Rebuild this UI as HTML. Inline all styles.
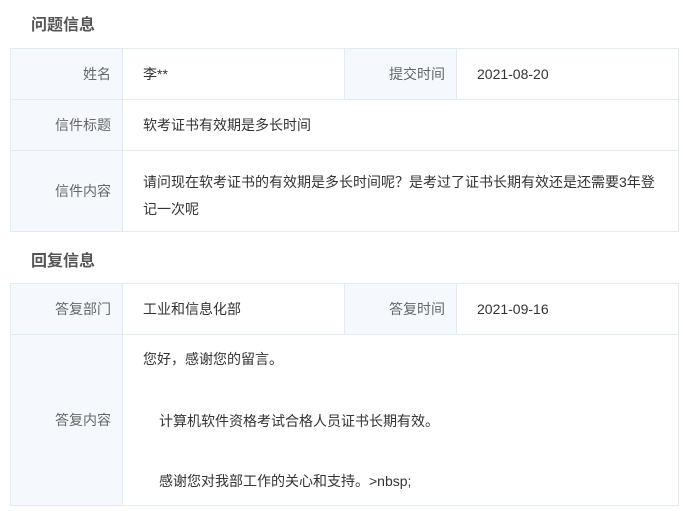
<!DOCTYPE html>
<html><head><meta charset="utf-8"><style>
body{margin:0;width:683px;height:511px;background:#fff;font-family:"Liberation Sans","Noto Sans CJK SC",sans-serif;font-size:14px;color:#333;position:relative;overflow:hidden}
.t{position:absolute;font-size:16px;font-weight:bold;color:#555;}
.c{position:absolute;box-sizing:border-box;border:1px solid #ddecf8;}
.l{background:#f5f9fe;color:#666;text-align:right;padding-right:11px;display:flex;align-items:center;justify-content:flex-end}
.v{background:#fff;display:flex;align-items:center;padding-left:20px}
p{margin:0;position:absolute;white-space:nowrap}
</style></head><body>
<div class="t" style="left:31px;top:11px">问题信息</div>
<div class="c l" style="left:10px;top:48px;width:113px;height:52px">姓名</div>
<div class="c v" style="left:122px;top:48px;width:223px;height:52px">李**</div>
<div class="c l" style="left:344px;top:48px;width:113px;height:52px">提交时间</div>
<div class="c v" style="left:456px;top:48px;width:223px;height:52px">2021-08-20</div>
<div class="c l" style="left:10px;top:99px;width:113px;height:52px">信件标题</div>
<div class="c v" style="left:122px;top:99px;width:557px;height:52px">软考证书有效期是多长时间</div>
<div class="c l" style="left:10px;top:150px;width:113px;height:82px">信件内容</div>
<div class="c" style="left:122px;top:150px;width:557px;height:82px;padding:18px 20px 0 20px;line-height:27px">请问现在软考证书的有效期是多长时间呢？是考过了证书长期有效还是还需要3年登记一次呢</div>

<div class="t" style="left:31px;top:247px">回复信息</div>
<div class="c l" style="left:10px;top:283px;width:113px;height:52px">答复部门</div>
<div class="c v" style="left:122px;top:283px;width:223px;height:52px">工业和信息化部</div>
<div class="c l" style="left:344px;top:283px;width:113px;height:52px">答复时间</div>
<div class="c v" style="left:456px;top:283px;width:223px;height:52px">2021-09-16</div>
<div class="c l" style="left:10px;top:334px;width:113px;height:172px">答复内容</div>
<div class="c" style="left:122px;top:334px;width:557px;height:172px"></div>
<p style="left:143px;top:349px">您好，感谢您的留言。</p>
<p style="left:159px;top:411px">计算机软件资格考试合格人员证书长期有效。</p>
<p style="left:159px;top:471px">感谢您对我部工作的关心和支持。&gt;nbsp;</p>
</body></html>
